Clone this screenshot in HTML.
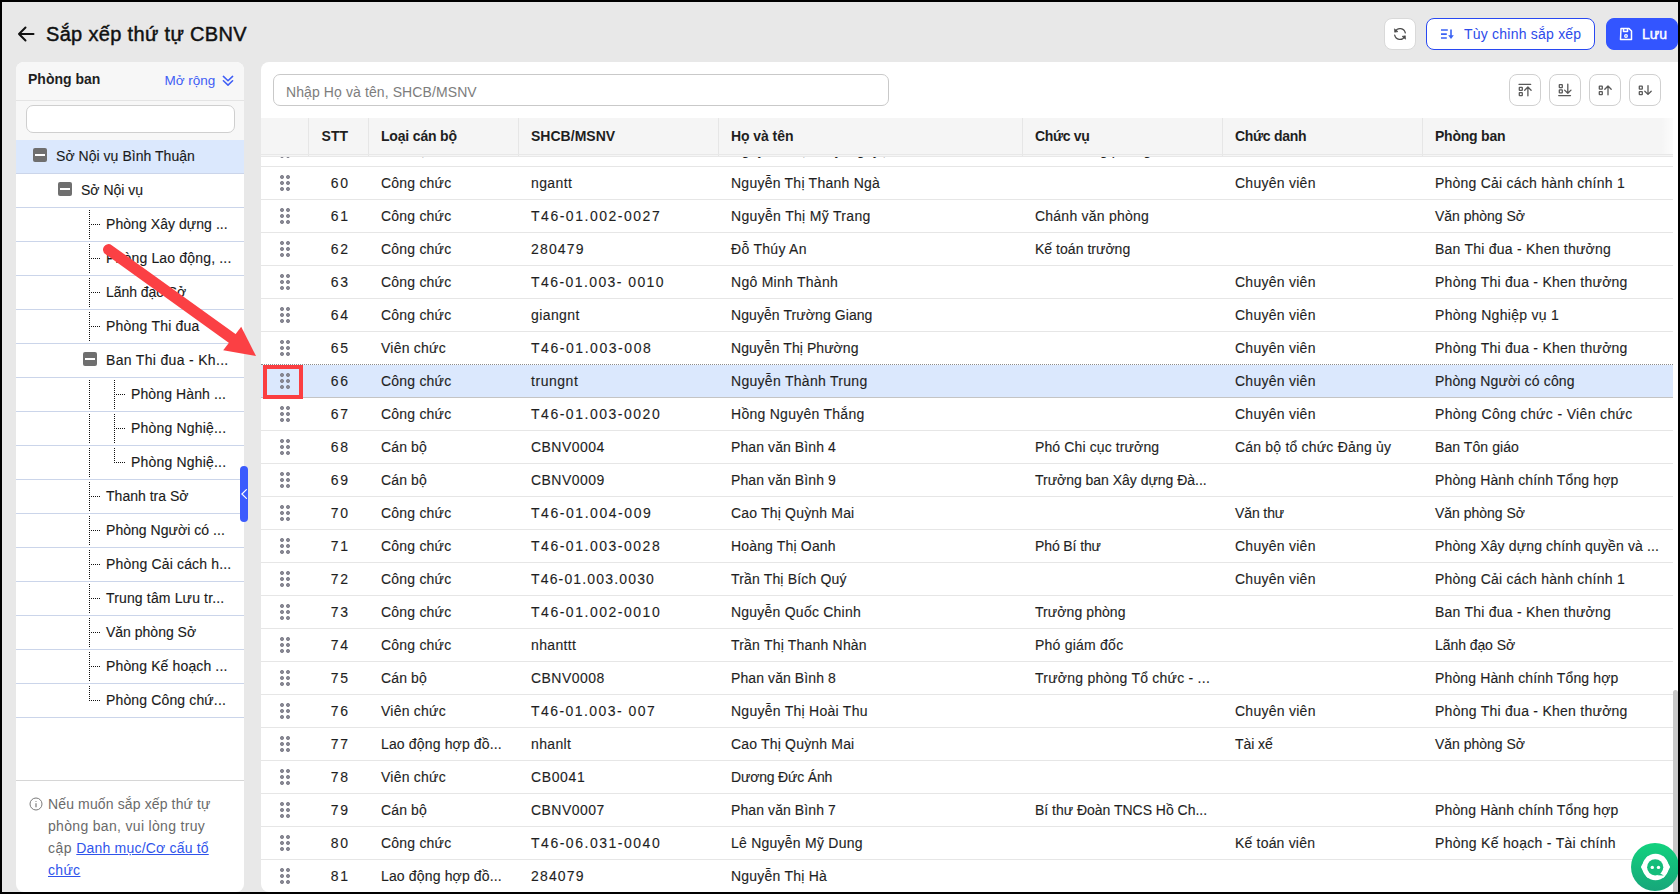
<!DOCTYPE html>
<html lang="vi"><head><meta charset="utf-8"><title>Sắp xếp thứ tự CBNV</title>
<style>
*{box-sizing:border-box;margin:0;padding:0}
html,body{width:1680px;height:894px;overflow:hidden}
body{background:#e8e8e8;font-family:"Liberation Sans",sans-serif;font-size:14px;color:#1f1f1f;position:relative}
i{font-style:normal;display:block}
.frame{position:absolute;left:0;top:0;width:1680px;height:894px;border:2px solid #000;z-index:50;pointer-events:none}
.back{position:absolute;left:17px;top:25px;width:18px;height:18px}
.title{position:absolute;left:46px;top:21px;font-size:20px;line-height:26px;font-weight:normal;color:#111;white-space:nowrap;letter-spacing:.33px;-webkit-text-stroke:.45px #111}
.btn{position:absolute;top:18px;height:32px;border-radius:8px;background:#fff;border:1px solid #d9d9d9}
.b-ref{left:1384px;width:32px}
.b-cus{left:1426px;width:169px;border-color:#2848f2;color:#2c4bea;font-size:14px;line-height:30px;padding-left:37px;white-space:nowrap}
.b-save{left:1606px;width:72px;background:#3355ff;border-color:#3355ff;color:#fff;font-size:14px;font-weight:normal;-webkit-text-stroke:.4px #fff;line-height:30px;padding-left:35px}
.btn svg{position:absolute}
/* sidebar */
.side{position:absolute;left:16px;top:62px;width:228px;height:830px;background:#fff;border-radius:8px;overflow:hidden}
.sh{height:39px;background:#f7f7f7;border-bottom:1px solid #e4e4e4;position:relative}
.sh b{position:absolute;left:12px;top:8px;font-size:14px;line-height:18px;color:#1f1f1f}
.sh span{position:absolute;left:148.500px;top:10.500px;font-size:13.500px;line-height:16px;color:#3f5ef5}
.sh svg{position:absolute;left:206px;top:12px}
.ss{height:39px;background:#f7f7f7;position:relative}
.ss i{position:absolute;left:10px;top:4px;width:209px;height:28px;border:1px solid #cfcfcf;border-radius:7px;background:#fff}
.ti{height:34px;border-bottom:1px solid #cbd5ea;position:relative;font-size:14px}
.ti.sel{background:#dbe8fd}
.mb{position:absolute;top:8px;width:14px;height:14px;border-radius:2px;background:#6f6f6f}
.mb:after{content:"";position:absolute;left:2px;top:6px;width:10px;height:2px;background:#fff}
.vl{position:absolute;width:1px;background:repeating-linear-gradient(180deg,#111 0 1px,transparent 1px 2px)}
.hl{position:absolute;top:16px;width:9px;height:1px;background:repeating-linear-gradient(90deg,#111 0 1px,transparent 1px 2px)}
.tl{position:absolute;top:7px;line-height:18px;white-space:nowrap;color:#1a1a1a}
.sf{position:absolute;left:0;top:718px;width:228px;border-top:1px solid #d6d6d6;padding:12px 12px 0 32px;font-size:14px;line-height:22px;color:#6a6a6a}
.sf a{color:#2f54eb;text-decoration:underline}
.sf svg{position:absolute;left:13px;top:16px}
.handle{position:absolute;left:240px;top:466px;width:8px;height:56px;border-radius:4px;background:#3b5bfd;z-index:5}
.handle svg{position:absolute;left:0;top:22px}
/* main */
.main{position:absolute;left:261px;top:62px;width:1420px;height:830px;background:#fff;border-radius:8px 0 0 8px;overflow:hidden}
.srch{position:absolute;left:12px;top:12px;width:616px;height:32px;border:1px solid #c9c9c9;border-radius:7px;padding-left:12px;font-size:14px;line-height:35px;color:#7d7d7d;white-space:nowrap}
.tb{position:absolute;top:12px;width:32px;height:32px;border:1px solid #d0d0d0;border-radius:8px;background:#fff}
.tb svg{position:absolute}
.th{position:absolute;left:0;top:56px;width:1412px;height:39px;background:#f5f5f5;border-bottom:1px solid #e8e8e8;z-index:3;font-weight:bold;display:flex}
.th:after{content:"";position:absolute;left:0;top:36px;width:100%;height:1px;background:#e8e8e8}
.th .c{line-height:37px;border-left:1px solid #e6e6e6;color:#1f1f1f;padding-left:12px}
.th .c1{padding-left:0}
.th .c0{border-left:0}
.body{position:absolute;left:0;top:72px;width:1412px}
.tr{height:33px;border-bottom:1px solid #e6e6e6;display:flex;line-height:32px}
.tr.sel{background:#dbe8fd;border-bottom:1px solid #c4c4c4;position:relative}
.tr.sel:before{content:"";position:absolute;left:0;top:-1px;width:100%;height:0;border-top:1px dotted #8c8c8c;background:#fff}
.c{padding-left:13px;white-space:nowrap;overflow:hidden;flex:none}
.c0{width:47px;padding:0;position:relative}
.c1{width:60px;text-align:right;padding:0 20px 0 0}
.c2{width:150px}.c3{width:200px}.c4{width:304px}.c5{width:200px}.c6{width:200px}.c7{width:251px}
.grip{position:absolute;left:19px;top:8px;width:10px;height:16px;
 background:radial-gradient(circle at 2px 2px,#878792 1.6px,transparent 2.3px) 0 0/6px 6px}
.redbox{position:absolute;left:263px;top:365px;width:40px;height:34px;border:4px solid #fb3e41;z-index:10}
.sb{position:absolute;left:1673px;top:690px;width:5px;height:204px;background:#c8c8c8;border-radius:3px 3px 0 0;z-index:6}
.chat{position:absolute;left:1631px;top:843px;width:48px;height:48px;border-radius:50%;background:linear-gradient(180deg,#12d27e,#17a67a);z-index:20}
.chat svg{position:absolute;left:0;top:0}
.arrow{position:absolute;left:0;top:0;z-index:30}

.tr .c span{position:relative;top:0}
.th i{position:absolute;right:0;top:0;width:12px;height:36px;background:linear-gradient(90deg,rgba(255,255,255,0),rgba(255,255,255,.7))}
.tr .c span,.tl span{-webkit-text-stroke:.12px #1f1f1f}

</style></head><body>
<svg class="back" viewBox="0 0 18 18"><path d="M16.500 9H2M8.500 2.500L2 9l6.500 6.500" fill="none" stroke="#111" stroke-width="2" stroke-linecap="round" stroke-linejoin="round"/></svg>
<div class="title">Sắp xếp thứ tự CBNV</div>
<div class="btn b-ref"><svg style="left:8px;top:8px" width="14" height="14" viewBox="0 0 14 14"><path d="M12.300 5.800A5.400 5.400 0 0 0 2.300 4.300M1.700 8.200A5.400 5.400 0 0 0 11.700 9.700" fill="none" stroke="#4a4a4a" stroke-width="1.250" stroke-linecap="round"/><path d="M1.400 1.800L1.700 5.300 5 4.600zM12.600 12.200L12.300 8.700 9 9.400z" fill="#4a4a4a" stroke="#4a4a4a" stroke-width=".6" stroke-linejoin="round"/></svg></div>
<div class="btn b-cus"><svg style="left:14px;top:9px" width="14" height="12" viewBox="0 0 14 12"><path d="M0 2h6.800M0 6.100h5.800M0 10h5.800M10 1.600v7" fill="none" stroke="#3b63f3" stroke-width="1.600" stroke-linecap="butt"/><path d="M7.200 7.300h5.600L10 11z" fill="#3b63f3"/></svg><span style="letter-spacing:0.22px">Tùy chỉnh sắp xếp</span></div>
<div class="btn b-save"><svg style="left:12px;top:8px" width="14" height="14" viewBox="0 0 14 14"><path d="M2 1.500h8l2.500 2.500v8.500h-11zM4.500 1.500v3h4v-3" fill="none" stroke="#fff" stroke-width="1.5" stroke-linejoin="round"/><circle cx="7" cy="9" r="1.300" fill="none" stroke="#fff" stroke-width="1.300"/></svg>Lưu</div>

<div class="side">
 <div class="sh"><b>Phòng ban</b><span>Mở rộng</span><svg width="12" height="12" viewBox="0 0 12 12"><path d="M1.400 2.400L6 6.800l4.600-4.400M1.400 6.700L6 11.100l4.600-4.400" fill="none" stroke="#3f5ef5" stroke-width="1.500" stroke-linecap="round" stroke-linejoin="round"/></svg></div>
 <div class="ss"><i></i></div>
<div class="ti sel"><i class="mb" style="left:17px"></i><span class="tl" style="left:40px"><span style="letter-spacing:0.04px">Sở Nội vụ Bình Thuận</span></span></div>
<div class="ti"><i class="mb" style="left:42px"></i><span class="tl" style="left:65px"><span style="letter-spacing:0.0px">Sở Nội vụ</span></span></div>
<div class="ti"><i class="vl" style="left:73px;top:2px;height:29px"></i><i class="hl" style="left:75px"></i><span class="tl" style="left:90px"><span style="letter-spacing:0.06px">Phòng Xây dựng ...</span></span></div>
<div class="ti"><i class="vl" style="left:73px;top:2px;height:29px"></i><i class="hl" style="left:75px"></i><span class="tl" style="left:90px"><span style="letter-spacing:0.17px">Phòng Lao động, ...</span></span></div>
<div class="ti"><i class="vl" style="left:73px;top:2px;height:29px"></i><i class="hl" style="left:75px"></i><span class="tl" style="left:90px"><span style="letter-spacing:-0.05px">Lãnh đạo Sở</span></span></div>
<div class="ti"><i class="vl" style="left:73px;top:2px;height:29px"></i><i class="hl" style="left:75px"></i><span class="tl" style="left:90px"><span style="letter-spacing:0.21px">Phòng Thi đua</span></span></div>
<div class="ti"><i class="mb" style="left:67px"></i><span class="tl" style="left:90px"><span style="letter-spacing:0.32px">Ban Thi đua - Kh...</span></span></div>
<div class="ti"><i class="vl" style="left:98px;top:2px;height:29px"></i><i class="hl" style="left:100px"></i><i class="vl" style="left:73px;top:2px;height:29px"></i><span class="tl" style="left:115px"><span style="letter-spacing:0.11px">Phòng Hành ...</span></span></div>
<div class="ti"><i class="vl" style="left:98px;top:2px;height:29px"></i><i class="hl" style="left:100px"></i><i class="vl" style="left:73px;top:2px;height:29px"></i><span class="tl" style="left:115px"><span style="letter-spacing:0.19px">Phòng Nghiệ...</span></span></div>
<div class="ti"><i class="vl" style="left:98px;top:2px;height:15px"></i><i class="hl" style="left:100px"></i><i class="vl" style="left:73px;top:2px;height:29px"></i><span class="tl" style="left:115px"><span style="letter-spacing:0.19px">Phòng Nghiệ...</span></span></div>
<div class="ti"><i class="vl" style="left:73px;top:2px;height:29px"></i><i class="hl" style="left:75px"></i><span class="tl" style="left:90px"><span style="letter-spacing:0.02px">Thanh tra Sở</span></span></div>
<div class="ti"><i class="vl" style="left:73px;top:2px;height:29px"></i><i class="hl" style="left:75px"></i><span class="tl" style="left:90px"><span style="letter-spacing:0.04px">Phòng Người có ...</span></span></div>
<div class="ti"><i class="vl" style="left:73px;top:2px;height:29px"></i><i class="hl" style="left:75px"></i><span class="tl" style="left:90px"><span style="letter-spacing:0.17px">Phòng Cải cách h...</span></span></div>
<div class="ti"><i class="vl" style="left:73px;top:2px;height:29px"></i><i class="hl" style="left:75px"></i><span class="tl" style="left:90px"><span style="letter-spacing:0.15px">Trung tâm Lưu tr...</span></span></div>
<div class="ti"><i class="vl" style="left:73px;top:2px;height:29px"></i><i class="hl" style="left:75px"></i><span class="tl" style="left:90px"><span style="letter-spacing:-0.0px">Văn phòng Sở</span></span></div>
<div class="ti"><i class="vl" style="left:73px;top:2px;height:29px"></i><i class="hl" style="left:75px"></i><span class="tl" style="left:90px"><span style="letter-spacing:0.13px">Phòng Kế hoạch ...</span></span></div>
<div class="ti"><i class="vl" style="left:73px;top:2px;height:15px"></i><i class="hl" style="left:75px"></i><span class="tl" style="left:90px"><span style="letter-spacing:0.14px">Phòng Công chứ...</span></span></div>
 <div class="sf"><svg width="14" height="14" viewBox="0 0 14 14"><circle cx="7" cy="7" r="6" fill="none" stroke="#7a7a7a" stroke-width="1"/><path d="M7 6.200v4M7 4v.8" stroke="#7a7a7a" stroke-width="1.200"/></svg><span style="letter-spacing:0.13px">Nếu muốn sắp xếp thứ tự</span><br><span style="letter-spacing:0.32px">phòng ban, vui lòng truy</span><br><span style="letter-spacing:0.46px">cập </span><a><span style="letter-spacing:0.19px">Danh mục/Cơ cấu tổ</span><br><span style="letter-spacing:0.32px">chức</span></a></div>
</div>
<div class="handle"><svg width="8" height="12" viewBox="0 0 8 12"><path d="M6.400 1.600L1.900 6 6.400 10.400" fill="none" stroke="#fff" stroke-width="1.200" stroke-linecap="round" stroke-linejoin="miter"/></svg></div>

<div class="main">
 <div class="srch"><span style="letter-spacing:0.1px">Nhập Họ và tên, SHCB/MSNV</span></div>
 <div class="tb" style="left:1248px"><svg width="32" height="32" viewBox="0 0 32 32" style="left:-1px;top:-1px"><g fill="none" stroke="#595959" stroke-width="1.3" stroke-linecap="round" stroke-linejoin="round"><path d="M10 10.300H21.700"/><rect x="10.300" y="13.450" width="3" height="3" rx=".4"/><rect x="10.300" y="18.650" width="3" height="3" rx=".4"/><path d="M18.900 21.800V13M15.700 16.200L18.900 13l3.200 3.200"/></g></svg></div>
 <div class="tb" style="left:1288px"><svg width="32" height="32" viewBox="0 0 32 32" style="left:-1px;top:-1px"><g fill="none" stroke="#595959" stroke-width="1.3" stroke-linecap="round" stroke-linejoin="round"><path d="M9.700 21.600H21.500"/><rect x="10.300" y="10.550" width="3" height="3" rx=".4"/><rect x="10.300" y="15.950" width="3" height="3" rx=".4"/><path d="M18.800 10.100V19.300M15.600 16.100L18.800 19.300l3.200-3.200"/></g></svg></div>
 <div class="tb" style="left:1328px"><svg width="32" height="32" viewBox="0 0 32 32" style="left:-1px;top:-1px"><g fill="none" stroke="#595959" stroke-width="1.3" stroke-linecap="round" stroke-linejoin="round"><rect x="10.300" y="12.050" width="3" height="3" rx=".4"/><rect x="10.300" y="17.650" width="3" height="3" rx=".4"/><path d="M19 20.800V12M15.800 15.200L19 12l3.200 3.200"/></g></svg></div>
 <div class="tb" style="left:1368px"><svg width="32" height="32" viewBox="0 0 32 32" style="left:-1px;top:-1px"><g fill="none" stroke="#595959" stroke-width="1.3" stroke-linecap="round" stroke-linejoin="round"><rect x="10.300" y="12.050" width="3" height="3" rx=".4"/><rect x="10.300" y="17.650" width="3" height="3" rx=".4"/><path d="M19 11.600V20.400M15.800 17.200L19 20.400l3.200-3.200"/></g></svg></div>
 <div class="th"><div class="c c0"></div><div class="c c1"><span style="letter-spacing:-0.01px">STT</span></div><div class="c c2"><span style="letter-spacing:-0.18px">Loại cán bộ</span></div><div class="c c3"><span style="letter-spacing:0.02px">SHCB/MSNV</span></div><div class="c c4"><span style="letter-spacing:-0.07px">Họ và tên</span></div><div class="c c5"><span style="letter-spacing:-0.34px">Chức vụ</span></div><div class="c c6"><span style="letter-spacing:-0.31px">Chức danh</span></div><div class="c c7"><span style="letter-spacing:-0.23px">Phòng ban</span></div><i></i></div>
 <div class="body">
<div class="tr"><div class="c c0"><i class="grip"></i></div><div class="c c1"><span style="letter-spacing:1.68px;margin-right:-1.68px">59</span></div><div class="c c2"><span style="letter-spacing:0.12px">Cán bộ</span></div><div class="c c3"><span style="letter-spacing:0.46px">CBNV0003</span></div><div class="c c4"><span style="letter-spacing:0.33px">Nguyễn Thị Thùy Nguyệt</span></div><div class="c c5"><span style="letter-spacing:0.12px">Phó trưởng phòng</span></div><div class="c c6"></div><div class="c c7"></div></div>
<div class="tr"><div class="c c0"><i class="grip"></i></div><div class="c c1"><span style="letter-spacing:1.68px;margin-right:-1.68px">60</span></div><div class="c c2"><span style="letter-spacing:0.21px">Công chức</span></div><div class="c c3"><span style="letter-spacing:0.38px">ngantt</span></div><div class="c c4"><span style="letter-spacing:0.24px">Nguyễn Thị Thanh Ngà</span></div><div class="c c5"></div><div class="c c6"><span style="letter-spacing:0.26px">Chuyên viên</span></div><div class="c c7"><span style="letter-spacing:0.23px">Phòng Cải cách hành chính 1</span></div></div>
<div class="tr"><div class="c c0"><i class="grip"></i></div><div class="c c1"><span style="letter-spacing:1.68px;margin-right:-1.68px">61</span></div><div class="c c2"><span style="letter-spacing:0.21px">Công chức</span></div><div class="c c3"><span style="letter-spacing:1.52px">T46-01.002-0027</span></div><div class="c c4"><span style="letter-spacing:0.32px">Nguyễn Thị Mỹ Trang</span></div><div class="c c5"><span style="letter-spacing:0.23px">Chánh văn phòng</span></div><div class="c c6"></div><div class="c c7"><span style="letter-spacing:-0.02px">Văn phòng Sở</span></div></div>
<div class="tr"><div class="c c0"><i class="grip"></i></div><div class="c c1"><span style="letter-spacing:1.68px;margin-right:-1.68px">62</span></div><div class="c c2"><span style="letter-spacing:0.21px">Công chức</span></div><div class="c c3"><span style="letter-spacing:1.17px">280479</span></div><div class="c c4"><span style="letter-spacing:0.29px">Đỗ Thúy An</span></div><div class="c c5"><span style="letter-spacing:0.03px">Kế toán trưởng</span></div><div class="c c6"></div><div class="c c7"><span style="letter-spacing:0.24px">Ban Thi đua - Khen thưởng</span></div></div>
<div class="tr"><div class="c c0"><i class="grip"></i></div><div class="c c1"><span style="letter-spacing:1.68px;margin-right:-1.68px">63</span></div><div class="c c2"><span style="letter-spacing:0.21px">Công chức</span></div><div class="c c3"><span style="letter-spacing:1.42px">T46-01.003- 0010</span></div><div class="c c4"><span style="letter-spacing:0.27px">Ngô Minh Thành</span></div><div class="c c5"></div><div class="c c6"><span style="letter-spacing:0.26px">Chuyên viên</span></div><div class="c c7"><span style="letter-spacing:0.26px">Phòng Thi đua - Khen thưởng</span></div></div>
<div class="tr"><div class="c c0"><i class="grip"></i></div><div class="c c1"><span style="letter-spacing:1.68px;margin-right:-1.68px">64</span></div><div class="c c2"><span style="letter-spacing:0.21px">Công chức</span></div><div class="c c3"><span style="letter-spacing:0.41px">giangnt</span></div><div class="c c4"><span style="letter-spacing:0.08px">Nguyễn Trường Giang</span></div><div class="c c5"></div><div class="c c6"><span style="letter-spacing:0.26px">Chuyên viên</span></div><div class="c c7"><span style="letter-spacing:0.3px">Phòng Nghiệp vụ 1</span></div></div>
<div class="tr"><div class="c c0"><i class="grip"></i></div><div class="c c1"><span style="letter-spacing:1.68px;margin-right:-1.68px">65</span></div><div class="c c2"><span style="letter-spacing:0.23px">Viên chức</span></div><div class="c c3"><span style="letter-spacing:1.55px">T46-01.003-008</span></div><div class="c c4"><span style="letter-spacing:0.06px">Nguyễn Thị Phường</span></div><div class="c c5"></div><div class="c c6"><span style="letter-spacing:0.26px">Chuyên viên</span></div><div class="c c7"><span style="letter-spacing:0.26px">Phòng Thi đua - Khen thưởng</span></div></div>
<div class="tr sel"><div class="c c0"><i class="grip"></i></div><div class="c c1"><span style="letter-spacing:1.68px;margin-right:-1.68px">66</span></div><div class="c c2"><span style="letter-spacing:0.21px">Công chức</span></div><div class="c c3"><span style="letter-spacing:0.54px">trungnt</span></div><div class="c c4"><span style="letter-spacing:0.29px">Nguyễn Thành Trung</span></div><div class="c c5"></div><div class="c c6"><span style="letter-spacing:0.26px">Chuyên viên</span></div><div class="c c7"><span style="letter-spacing:0.15px">Phòng Người có công</span></div></div>
<div class="tr"><div class="c c0"><i class="grip"></i></div><div class="c c1"><span style="letter-spacing:1.68px;margin-right:-1.68px">67</span></div><div class="c c2"><span style="letter-spacing:0.21px">Công chức</span></div><div class="c c3"><span style="letter-spacing:1.52px">T46-01.003-0020</span></div><div class="c c4"><span style="letter-spacing:0.27px">Hồng Nguyên Thắng</span></div><div class="c c5"></div><div class="c c6"><span style="letter-spacing:0.26px">Chuyên viên</span></div><div class="c c7"><span style="letter-spacing:0.35px">Phòng Công chức - Viên chức</span></div></div>
<div class="tr"><div class="c c0"><i class="grip"></i></div><div class="c c1"><span style="letter-spacing:1.68px;margin-right:-1.68px">68</span></div><div class="c c2"><span style="letter-spacing:0.12px">Cán bộ</span></div><div class="c c3"><span style="letter-spacing:0.46px">CBNV0004</span></div><div class="c c4"><span style="letter-spacing:0.09px">Phan văn Bình 4</span></div><div class="c c5"><span style="letter-spacing:0.12px">Phó Chi cục trưởng</span></div><div class="c c6"><span style="letter-spacing:0.2px">Cán bộ tổ chức Đảng ủy</span></div><div class="c c7"><span style="letter-spacing:0.08px">Ban Tôn giáo</span></div></div>
<div class="tr"><div class="c c0"><i class="grip"></i></div><div class="c c1"><span style="letter-spacing:1.68px;margin-right:-1.68px">69</span></div><div class="c c2"><span style="letter-spacing:0.12px">Cán bộ</span></div><div class="c c3"><span style="letter-spacing:0.46px">CBNV0009</span></div><div class="c c4"><span style="letter-spacing:0.09px">Phan văn Bình 9</span></div><div class="c c5"><span style="letter-spacing:-0.02px">Trưởng ban Xây dựng Đà...</span></div><div class="c c6"></div><div class="c c7"><span style="letter-spacing:0.13px">Phòng Hành chính Tổng hợp</span></div></div>
<div class="tr"><div class="c c0"><i class="grip"></i></div><div class="c c1"><span style="letter-spacing:1.68px;margin-right:-1.68px">70</span></div><div class="c c2"><span style="letter-spacing:0.21px">Công chức</span></div><div class="c c3"><span style="letter-spacing:1.55px">T46-01.004-009</span></div><div class="c c4"><span style="letter-spacing:0.18px">Cao Thị Quỳnh Mai</span></div><div class="c c5"></div><div class="c c6"><span style="letter-spacing:-0.11px">Văn thư</span></div><div class="c c7"><span style="letter-spacing:-0.02px">Văn phòng Sở</span></div></div>
<div class="tr"><div class="c c0"><i class="grip"></i></div><div class="c c1"><span style="letter-spacing:1.68px;margin-right:-1.68px">71</span></div><div class="c c2"><span style="letter-spacing:0.21px">Công chức</span></div><div class="c c3"><span style="letter-spacing:1.52px">T46-01.003-0028</span></div><div class="c c4"><span style="letter-spacing:0.16px">Hoàng Thị Oanh</span></div><div class="c c5"><span style="letter-spacing:-0.11px">Phó Bí thư</span></div><div class="c c6"><span style="letter-spacing:0.26px">Chuyên viên</span></div><div class="c c7"><span style="letter-spacing:0.14px">Phòng Xây dựng chính quyền và ...</span></div></div>
<div class="tr"><div class="c c0"><i class="grip"></i></div><div class="c c1"><span style="letter-spacing:1.68px;margin-right:-1.68px">72</span></div><div class="c c2"><span style="letter-spacing:0.21px">Công chức</span></div><div class="c c3"><span style="letter-spacing:1.16px">T46-01.003.0030</span></div><div class="c c4"><span style="letter-spacing:0.16px">Trần Thị Bích Quý</span></div><div class="c c5"></div><div class="c c6"><span style="letter-spacing:0.26px">Chuyên viên</span></div><div class="c c7"><span style="letter-spacing:0.23px">Phòng Cải cách hành chính 1</span></div></div>
<div class="tr"><div class="c c0"><i class="grip"></i></div><div class="c c1"><span style="letter-spacing:1.68px;margin-right:-1.68px">73</span></div><div class="c c2"><span style="letter-spacing:0.21px">Công chức</span></div><div class="c c3"><span style="letter-spacing:1.52px">T46-01.002-0010</span></div><div class="c c4"><span style="letter-spacing:0.23px">Nguyễn Quốc Chinh</span></div><div class="c c5"><span style="letter-spacing:0.08px">Trưởng phòng</span></div><div class="c c6"></div><div class="c c7"><span style="letter-spacing:0.24px">Ban Thi đua - Khen thưởng</span></div></div>
<div class="tr"><div class="c c0"><i class="grip"></i></div><div class="c c1"><span style="letter-spacing:1.68px;margin-right:-1.68px">74</span></div><div class="c c2"><span style="letter-spacing:0.21px">Công chức</span></div><div class="c c3"><span style="letter-spacing:0.34px">nhanttt</span></div><div class="c c4"><span style="letter-spacing:0.2px">Trần Thị Thanh Nhàn</span></div><div class="c c5"><span style="letter-spacing:0.23px">Phó giám đốc</span></div><div class="c c6"></div><div class="c c7"><span style="letter-spacing:-0.07px">Lãnh đạo Sở</span></div></div>
<div class="tr"><div class="c c0"><i class="grip"></i></div><div class="c c1"><span style="letter-spacing:1.68px;margin-right:-1.68px">75</span></div><div class="c c2"><span style="letter-spacing:0.12px">Cán bộ</span></div><div class="c c3"><span style="letter-spacing:0.46px">CBNV0008</span></div><div class="c c4"><span style="letter-spacing:0.09px">Phan văn Bình 8</span></div><div class="c c5"><span style="letter-spacing:0.24px">Trưởng phòng Tổ chức - ...</span></div><div class="c c6"></div><div class="c c7"><span style="letter-spacing:0.13px">Phòng Hành chính Tổng hợp</span></div></div>
<div class="tr"><div class="c c0"><i class="grip"></i></div><div class="c c1"><span style="letter-spacing:1.68px;margin-right:-1.68px">76</span></div><div class="c c2"><span style="letter-spacing:0.23px">Viên chức</span></div><div class="c c3"><span style="letter-spacing:1.44px">T46-01.003- 007</span></div><div class="c c4"><span style="letter-spacing:0.26px">Nguyễn Thị Hoài Thu</span></div><div class="c c5"></div><div class="c c6"><span style="letter-spacing:0.26px">Chuyên viên</span></div><div class="c c7"><span style="letter-spacing:0.26px">Phòng Thi đua - Khen thưởng</span></div></div>
<div class="tr"><div class="c c0"><i class="grip"></i></div><div class="c c1"><span style="letter-spacing:1.68px;margin-right:-1.68px">77</span></div><div class="c c2"><span style="letter-spacing:0.15px">Lao động hợp đồ...</span></div><div class="c c3"><span style="letter-spacing:0.36px">nhanlt</span></div><div class="c c4"><span style="letter-spacing:0.18px">Cao Thị Quỳnh Mai</span></div><div class="c c5"></div><div class="c c6"><span style="letter-spacing:-0.07px">Tài xế</span></div><div class="c c7"><span style="letter-spacing:-0.02px">Văn phòng Sở</span></div></div>
<div class="tr"><div class="c c0"><i class="grip"></i></div><div class="c c1"><span style="letter-spacing:1.68px;margin-right:-1.68px">78</span></div><div class="c c2"><span style="letter-spacing:0.23px">Viên chức</span></div><div class="c c3"><span style="letter-spacing:0.63px">CB0041</span></div><div class="c c4"><span style="letter-spacing:-0.17px">Dương Đức Ánh</span></div><div class="c c5"></div><div class="c c6"></div><div class="c c7"></div></div>
<div class="tr"><div class="c c0"><i class="grip"></i></div><div class="c c1"><span style="letter-spacing:1.68px;margin-right:-1.68px">79</span></div><div class="c c2"><span style="letter-spacing:0.12px">Cán bộ</span></div><div class="c c3"><span style="letter-spacing:0.46px">CBNV0007</span></div><div class="c c4"><span style="letter-spacing:0.09px">Phan văn Bình 7</span></div><div class="c c5"><span style="letter-spacing:-0.02px">Bí thư Đoàn TNCS Hồ Ch...</span></div><div class="c c6"></div><div class="c c7"><span style="letter-spacing:0.13px">Phòng Hành chính Tổng hợp</span></div></div>
<div class="tr"><div class="c c0"><i class="grip"></i></div><div class="c c1"><span style="letter-spacing:1.68px;margin-right:-1.68px">80</span></div><div class="c c2"><span style="letter-spacing:0.21px">Công chức</span></div><div class="c c3"><span style="letter-spacing:1.52px">T46-06.031-0040</span></div><div class="c c4"><span style="letter-spacing:0.24px">Lê Nguyễn Mỹ Dung</span></div><div class="c c5"></div><div class="c c6"><span style="letter-spacing:0.19px">Kế toán viên</span></div><div class="c c7"><span style="letter-spacing:0.29px">Phòng Kế hoạch - Tài chính</span></div></div>
<div class="tr"><div class="c c0"><i class="grip"></i></div><div class="c c1"><span style="letter-spacing:1.68px;margin-right:-1.68px">81</span></div><div class="c c2"><span style="letter-spacing:0.15px">Lao động hợp đồ...</span></div><div class="c c3"><span style="letter-spacing:1.17px">284079</span></div><div class="c c4"><span style="letter-spacing:0.22px">Nguyễn Thị Hà</span></div><div class="c c5"></div><div class="c c6"></div><div class="c c7"></div></div>
 </div>
</div>
<div class="redbox"></div>
<div class="sb"></div>
<div class="chat"><svg width="48" height="48" viewBox="0 0 48 48"><circle cx="24.500" cy="24" r="13.200" fill="#fff"/><path d="M11.200 24L17 14.500H32L37.800 24 32 33.500H17z" fill="#fff" stroke="#fff" stroke-width="2.400" stroke-linejoin="round"/><circle cx="24.200" cy="24.300" r="8.100" fill="#14bd7b"/><path d="M28.500 30L32.800 32.600 26.500 32.300z" fill="#14bd7b"/><circle cx="21.300" cy="24.400" r="1.700" fill="#fff"/><circle cx="27.500" cy="24.400" r="1.700" fill="#fff"/></svg></div>
<svg class="arrow" width="330" height="420" viewBox="0 0 330 420"><path d="M108.500 249.600L234 339.800" stroke="#fb4044" stroke-width="11" stroke-linecap="round"/><path d="M256 356L241.200 326.800 223.200 350.300z" fill="#fb4044"/></svg>
<div class="frame"></div>
</body></html>
